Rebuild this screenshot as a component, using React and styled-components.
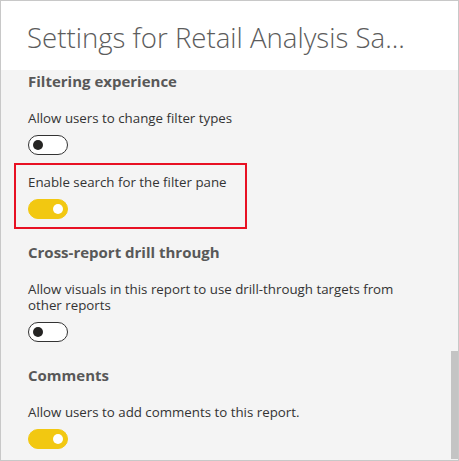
import React from "react";
import styled, { createGlobalStyle } from "styled-components";

const GlobalStyle = createGlobalStyle`
  html, body {
    margin: 0;
    padding: 0;
    background: #ffffff;
  }
  * {
    box-sizing: border-box;
  }
`;

const sections = [
  {
    title: "Filtering experience",
    settings: [
      { label: "Allow users to change filter types", on: false },
      { label: "Enable search for the filter pane", on: true, highlight: true },
    ],
  },
  {
    title: "Cross-report drill through",
    settings: [
      {
        label:
          "Allow visuals in this report to use drill-through targets from other reports",
        on: false,
      },
    ],
  },
  {
    title: "Comments",
    settings: [{ label: "Allow users to add comments to this report.", on: true }],
  },
];

const Toggle = ({ on }) => (
  <Track $on={on}>
    <Knob $on={on} />
  </Track>
);

export default function App() {
  return (
    <>
      <GlobalStyle />
      <Frame>
        <Header>
          <Title>Settings for Retail Analysis Sa...</Title>
        </Header>
        <Body>
          {sections.map((section) => (
            <Section key={section.title}>
              <Heading>{section.title}</Heading>
              {section.settings.map((s) => (
                <Setting key={s.label} $highlight={s.highlight}>
                  <Label>{s.label}</Label>
                  <Toggle on={s.on} />
                </Setting>
              ))}
            </Section>
          ))}
          <ScrollThumb />
        </Body>
      </Frame>
    </>
  );
}

const Frame = styled.div`
  width: 459px;
  height: 461px;
  border: 1px solid #c8c8c8;
  display: flex;
  flex-direction: column;
  overflow: hidden;
  font-family: "Open Sans", "Noto Sans", sans-serif;
`;

const Header = styled.div`
  height: 69px;
  flex-shrink: 0;
  background: #ffffff;
  padding-left: 26px;
  display: flex;
  align-items: center;
`;

const Title = styled.h1`
  margin: 0;
  padding-top: 2px;
  font-size: 27.6px;
  font-weight: 300;
  color: #5c5c5c;
  white-space: nowrap;
`;

const Body = styled.div`
  position: relative;
  flex: 1;
  background: #f4f4f4;
  padding: 1px 0 0 27px;
`;

const Section = styled.div`
  & + & {
    margin-top: 13px;
  }
`;

const Heading = styled.h2`
  margin: 0 0 8px;
  font-size: 15px;
  line-height: 20px;
  font-weight: 700;
  color: #585858;
`;

const Setting = styled.div`
  margin-left: -14px;
  padding: 9px 12px 8px;
  border: 2px solid ${(p) => (p.$highlight ? "#e81123" : "transparent")};
  width: ${(p) => (p.$highlight ? "233px" : "400px")};

  & + & {
    margin-top: -2px;
  }
`;

const Label = styled.div`
  font-size: 13.3px;
  line-height: 16px;
  color: #333333;
  margin-bottom: 9px;
  max-width: 380px;
`;

const Track = styled.div`
  position: relative;
  width: 40px;
  height: 20px;
  border-radius: 10px;
  background: ${(p) => (p.$on ? "#f2c811" : "#ffffff")};
  border: 1px solid ${(p) => (p.$on ? "#f2c811" : "#333333")};
`;

const Knob = styled.div`
  position: absolute;
  top: 4px;
  width: 10px;
  height: 10px;
  border-radius: 50%;
  background: ${(p) => (p.$on ? "#ffffff" : "#252423")};
  left: ${(p) => (p.$on ? "24px" : "4px")};
`;

const ScrollThumb = styled.div`
  position: absolute;
  right: 0;
  top: 281px;
  width: 7px;
  height: 108px;
  background: #c4c4c4;
`;
